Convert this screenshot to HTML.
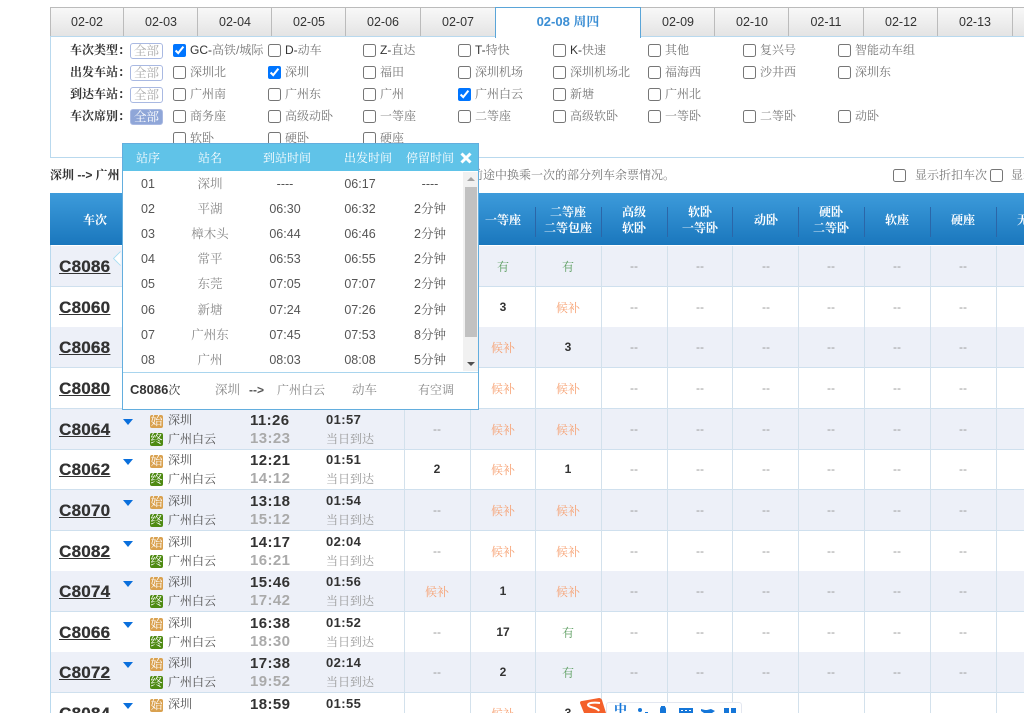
<!DOCTYPE html>
<html lang="zh"><head><meta charset="utf-8"><title>车次</title>
<style>
html{overflow:hidden;height:713px;width:1024px}
html,body{margin:0;padding:0;background:#fff}
body{width:1024px;height:713px;overflow:hidden;position:relative;font:12px/16px "Liberation Sans","Noto Serif CJK SC",serif;color:#666}
div,span,b,i,a,input,s{position:absolute;white-space:nowrap;font-style:normal;text-decoration:none}
input{margin:0;width:13px;height:13px}
.t{top:7px;height:28px;line-height:29px;width:74px;text-align:center;color:#333;border-top:1px solid #bbb;border-left:1px solid #bbb;background:linear-gradient(#f8f8f8,#e4e4e4);font-size:12.5px}
.lb{left:70px;font-weight:bold;color:#333}
.all{left:130px;width:31px;height:14px;line-height:14px;border:1px solid #a9b9e2;border-radius:3px;color:#aaa;text-align:center;font-size:12.5px}
.x{color:#777}
.r{left:51px;width:973px;height:40px;border-bottom:1px solid #cfe0ee;overflow:hidden}
.o{background:#edf0f8}
.n{left:8px;top:11px;font:bold 17px/20px "Liberation Sans",sans-serif;color:#333;text-decoration:underline;letter-spacing:.2px;text-shadow:.3px 0 #333}
.ar{left:72px;top:10px;width:0;height:0;border:5px solid transparent;border-top:6px solid #0a6fdc;border-bottom:0}
.i1,.i2{left:99px;width:13px;height:13px;line-height:13px;border-radius:2px;text-align:center;color:#fff;font-size:12px;overflow:hidden}
.i1{top:6px;background:#d9a14f}.i2{top:24px;background:#4e8a12}
.s1,.s2{left:117px;color:#555}.s1{top:3px}.s2{top:22px}
.d1,.d2{left:199px;font:bold 15px/16px "Liberation Sans",sans-serif;letter-spacing:.4px;color:#333}.d1{top:4px}.d2{top:22px;color:#aaa}
.l1{left:275px;top:3px;font:bold 13px/16px "Liberation Sans",sans-serif;letter-spacing:.4px;color:#333}
.l2{left:275px;top:22px;color:#999}
.c{top:12px;width:66px;text-align:center;color:#999}
.g{color:#5f9f63;top:13px}.h{color:#f7a172;top:13px}.m{color:#333;font-weight:bold}
.c1{left:353px}.c2{left:419px}.c3{left:484px}.c4{left:550px}.c5{left:616px}.c6{left:682px}.c7{left:747px}.c8{left:813px}.c9{left:879px}.c10{left:945px}
.v{top:246px;height:467px;width:1px;background:#d3e1ec}
.hs{top:207px;height:30px;width:1px;background:#2b66a8}
.hh{top:204px;width:66px;text-align:center;color:#fff;font-weight:bold;line-height:16px}
.hc{top:212px}
.p{color:#fff;top:150px;font-size:12px;text-align:center}
.q{color:#555;text-align:center;font-size:12.5px}
.y1{top:176px}.y2{top:201px}.y3{top:226px}.y4{top:251px}.y5{top:276px}.y6{top:302px}.y7{top:327px}.y8{top:352px}
.k1{left:128px;width:40px}.k2{left:180px;width:60px;color:#888}.k3{left:255px;width:60px}.k4{left:330px;width:60px}.k5{left:400px;width:60px}
</style></head><body>

<div style="left:50px;top:7px;width:72px;height:28px;line-height:29px;text-align:center;color:#333;border:1px solid #bbb;border-bottom:0;background:linear-gradient(#f8f8f8,#e4e4e4);font-size:12.5px">02-02</div>
<div class="t" style="left:123px">02-03</div>
<div class="t" style="left:197px">02-04</div>
<div class="t" style="left:271px">02-05</div>
<div class="t" style="left:345px">02-06</div>
<div class="t" style="left:420px">02-07</div>
<div class="t" style="left:640px">02-09</div>
<div class="t" style="left:714px">02-10</div>
<div class="t" style="left:788px">02-11</div>
<div class="t" style="left:863px">02-12</div>
<div class="t" style="left:937px">02-13</div>
<div class="t" style="left:1012px;width:11px"></div>

<div style="left:50px;top:36px;width:973px;height:120px;border:1px solid #b9d9ee;border-right:0"></div>
<div style="left:495px;top:7px;width:144px;height:30px;background:#fff;border:1px solid #5aa5d8;border-bottom:0;border-width:1px 1px 0 1px;line-height:28px;text-align:center;color:#3b8ed4;font-weight:bold;font-size:13px">02-08 周四</div>

<b class="lb" style="top:42px">车次类型：</b><span class="all" style="top:43px">全部</span>
<b class="lb" style="top:64px">出发车站：</b><span class="all" style="top:65px">全部</span>
<b class="lb" style="top:86px">到达车站：</b><span class="all" style="top:87px">全部</span>
<b class="lb" style="top:108px">车次席别：</b><span class="all" style="top:109px;background:#8fa6d8;color:#fff">全部</span>

<input type="checkbox" checked style="left:173px;top:44px"><span class="x" style="left:190px;top:42px"><span style="position:static;color:#333">GC-</span>高铁/城际</span>
<input type="checkbox" style="left:268px;top:44px"><span class="x" style="left:285px;top:42px"><span style="position:static;color:#333">D-</span>动车</span>
<input type="checkbox" style="left:363px;top:44px"><span class="x" style="left:380px;top:42px"><span style="position:static;color:#333">Z-</span>直达</span>
<input type="checkbox" style="left:458px;top:44px"><span class="x" style="left:475px;top:42px"><span style="position:static;color:#333">T-</span>特快</span>
<input type="checkbox" style="left:553px;top:44px"><span class="x" style="left:570px;top:42px"><span style="position:static;color:#333">K-</span>快速</span>
<input type="checkbox" style="left:648px;top:44px"><span class="x" style="left:665px;top:42px">其他</span>
<input type="checkbox" style="left:743px;top:44px"><span class="x" style="left:760px;top:42px">复兴号</span>
<input type="checkbox" style="left:838px;top:44px"><span class="x" style="left:855px;top:42px">智能动车组</span>

<input type="checkbox" style="left:173px;top:66px"><span class="x" style="left:190px;top:64px">深圳北</span>
<input type="checkbox" checked style="left:268px;top:66px"><span class="x" style="left:285px;top:64px">深圳</span>
<input type="checkbox" style="left:363px;top:66px"><span class="x" style="left:380px;top:64px">福田</span>
<input type="checkbox" style="left:458px;top:66px"><span class="x" style="left:475px;top:64px">深圳机场</span>
<input type="checkbox" style="left:553px;top:66px"><span class="x" style="left:570px;top:64px">深圳机场北</span>
<input type="checkbox" style="left:648px;top:66px"><span class="x" style="left:665px;top:64px">福海西</span>
<input type="checkbox" style="left:743px;top:66px"><span class="x" style="left:760px;top:64px">沙井西</span>
<input type="checkbox" style="left:838px;top:66px"><span class="x" style="left:855px;top:64px">深圳东</span>

<input type="checkbox" style="left:173px;top:88px"><span class="x" style="left:190px;top:86px">广州南</span>
<input type="checkbox" style="left:268px;top:88px"><span class="x" style="left:285px;top:86px">广州东</span>
<input type="checkbox" style="left:363px;top:88px"><span class="x" style="left:380px;top:86px">广州</span>
<input type="checkbox" checked style="left:458px;top:88px"><span class="x" style="left:475px;top:86px">广州白云</span>
<input type="checkbox" style="left:553px;top:88px"><span class="x" style="left:570px;top:86px">新塘</span>
<input type="checkbox" style="left:648px;top:88px"><span class="x" style="left:665px;top:86px">广州北</span>

<input type="checkbox" style="left:173px;top:110px"><span class="x" style="left:190px;top:108px">商务座</span>
<input type="checkbox" style="left:268px;top:110px"><span class="x" style="left:285px;top:108px">高级动卧</span>
<input type="checkbox" style="left:363px;top:110px"><span class="x" style="left:380px;top:108px">一等座</span>
<input type="checkbox" style="left:458px;top:110px"><span class="x" style="left:475px;top:108px">二等座</span>
<input type="checkbox" style="left:553px;top:110px"><span class="x" style="left:570px;top:108px">高级软卧</span>
<input type="checkbox" style="left:648px;top:110px"><span class="x" style="left:665px;top:108px">一等卧</span>
<input type="checkbox" style="left:743px;top:110px"><span class="x" style="left:760px;top:108px">二等卧</span>
<input type="checkbox" style="left:838px;top:110px"><span class="x" style="left:855px;top:108px">动卧</span>

<input type="checkbox" style="left:173px;top:132px"><span class="x" style="left:190px;top:130px">软卧</span>
<input type="checkbox" style="left:268px;top:132px"><span class="x" style="left:285px;top:130px">硬卧</span>
<input type="checkbox" style="left:363px;top:132px"><span class="x" style="left:380px;top:130px">硬座</span>

<b style="left:50px;top:167px;color:#333">深圳 --&gt; 广州</b>
<span class="x" style="left:471px;top:167px">前途中换乘一次的部分列车余票情况。</span>
<input type="checkbox" style="left:893px;top:169px"><span class="x" style="left:915px;top:167px">显示折扣车次</span>
<input type="checkbox" style="left:990px;top:169px"><span class="x" style="left:1011px;top:167px;width:13px;overflow:hidden">显示积分兑换车次</span>

<div style="left:50px;top:193px;width:974px;height:52px;background:linear-gradient(#3d9bdb,#1a77bd)"></div>
<b class="hh hc" style="left:62px">车次</b>
<b class="hh hc" style="left:470px">一等座</b>
<b class="hh" style="left:535px">二等座<br>二等包座</b>
<b class="hh" style="left:601px">高级<br>软卧</b>
<b class="hh" style="left:667px">软卧<br>一等卧</b>
<b class="hh hc" style="left:733px">动卧</b>
<b class="hh" style="left:798px">硬卧<br>二等卧</b>
<b class="hh hc" style="left:864px">软座</b>
<b class="hh hc" style="left:930px">硬座</b>
<b class="hh hc" style="left:996px;width:28px;overflow:hidden;text-align:left;text-indent:21px">无座</b>
<s class="hs" style="left:535px"></s><s class="hs" style="left:601px"></s><s class="hs" style="left:667px"></s><s class="hs" style="left:732px"></s><s class="hs" style="left:798px"></s><s class="hs" style="left:864px"></s><s class="hs" style="left:930px"></s><s class="hs" style="left:996px"></s>

<div style="left:50px;top:245px;width:1px;height:468px;background:#b9d9ee"></div>

<div class="r o" style="top:246px"><a class="n">C8086</a><i class="c c2 g">有</i><i class="c c3 g">有</i><i class="c c4">--</i><i class="c c5">--</i><i class="c c6">--</i><i class="c c7">--</i><i class="c c8">--</i><i class="c c9">--</i></div>
<div class="r" style="top:287px"><a class="n">C8060</a><i class="c c2 m">3</i><i class="c c3 h">候补</i><i class="c c4">--</i><i class="c c5">--</i><i class="c c6">--</i><i class="c c7">--</i><i class="c c8">--</i><i class="c c9">--</i></div>
<div class="r o" style="top:327px"><a class="n">C8068</a><i class="c c2 h">候补</i><i class="c c3 m">3</i><i class="c c4">--</i><i class="c c5">--</i><i class="c c6">--</i><i class="c c7">--</i><i class="c c8">--</i><i class="c c9">--</i></div>
<div class="r" style="top:368px"><a class="n">C8080</a><i class="c c2 h">候补</i><i class="c c3 h">候补</i><i class="c c4">--</i><i class="c c5">--</i><i class="c c6">--</i><i class="c c7">--</i><i class="c c8">--</i><i class="c c9">--</i></div>

<div class="r o" style="top:409px"><a class="n">C8064</a><s class="ar"></s><i class="i1">始</i><i class="i2">终</i><span class="s1">深圳</span><span class="s2">广州白云</span><b class="d1">11:26</b><b class="d2">13:23</b><b class="l1">01:57</b><span class="l2">当日到达</span><i class="c c1">--</i><i class="c c2 h">候补</i><i class="c c3 h">候补</i><i class="c c4">--</i><i class="c c5">--</i><i class="c c6">--</i><i class="c c7">--</i><i class="c c8">--</i><i class="c c9">--</i></div>
<div class="r" style="top:449px"><a class="n">C8062</a><s class="ar"></s><i class="i1">始</i><i class="i2">终</i><span class="s1">深圳</span><span class="s2">广州白云</span><b class="d1">12:21</b><b class="d2">14:12</b><b class="l1">01:51</b><span class="l2">当日到达</span><i class="c c1 m">2</i><i class="c c2 h">候补</i><i class="c c3 m">1</i><i class="c c4">--</i><i class="c c5">--</i><i class="c c6">--</i><i class="c c7">--</i><i class="c c8">--</i><i class="c c9">--</i></div>
<div class="r o" style="top:490px"><a class="n">C8070</a><s class="ar"></s><i class="i1">始</i><i class="i2">终</i><span class="s1">深圳</span><span class="s2">广州白云</span><b class="d1">13:18</b><b class="d2">15:12</b><b class="l1">01:54</b><span class="l2">当日到达</span><i class="c c1">--</i><i class="c c2 h">候补</i><i class="c c3 h">候补</i><i class="c c4">--</i><i class="c c5">--</i><i class="c c6">--</i><i class="c c7">--</i><i class="c c8">--</i><i class="c c9">--</i></div>
<div class="r" style="top:531px"><a class="n">C8082</a><s class="ar"></s><i class="i1">始</i><i class="i2">终</i><span class="s1">深圳</span><span class="s2">广州白云</span><b class="d1">14:17</b><b class="d2">16:21</b><b class="l1">02:04</b><span class="l2">当日到达</span><i class="c c1">--</i><i class="c c2 h">候补</i><i class="c c3 h">候补</i><i class="c c4">--</i><i class="c c5">--</i><i class="c c6">--</i><i class="c c7">--</i><i class="c c8">--</i><i class="c c9">--</i></div>
<div class="r o" style="top:571px"><a class="n">C8074</a><s class="ar"></s><i class="i1">始</i><i class="i2">终</i><span class="s1">深圳</span><span class="s2">广州白云</span><b class="d1">15:46</b><b class="d2">17:42</b><b class="l1">01:56</b><span class="l2">当日到达</span><i class="c c1 h">候补</i><i class="c c2 m">1</i><i class="c c3 h">候补</i><i class="c c4">--</i><i class="c c5">--</i><i class="c c6">--</i><i class="c c7">--</i><i class="c c8">--</i><i class="c c9">--</i></div>
<div class="r" style="top:612px"><a class="n">C8066</a><s class="ar"></s><i class="i1">始</i><i class="i2">终</i><span class="s1">深圳</span><span class="s2">广州白云</span><b class="d1">16:38</b><b class="d2">18:30</b><b class="l1">01:52</b><span class="l2">当日到达</span><i class="c c1">--</i><i class="c c2 m">17</i><i class="c c3 g">有</i><i class="c c4">--</i><i class="c c5">--</i><i class="c c6">--</i><i class="c c7">--</i><i class="c c8">--</i><i class="c c9">--</i></div>
<div class="r o" style="top:652px"><a class="n">C8072</a><s class="ar"></s><i class="i1">始</i><i class="i2">终</i><span class="s1">深圳</span><span class="s2">广州白云</span><b class="d1">17:38</b><b class="d2">19:52</b><b class="l1">02:14</b><span class="l2">当日到达</span><i class="c c1">--</i><i class="c c2 m">2</i><i class="c c3 g">有</i><i class="c c4">--</i><i class="c c5">--</i><i class="c c6">--</i><i class="c c7">--</i><i class="c c8">--</i><i class="c c9">--</i></div>
<div class="r" style="top:693px;height:20px;border:0"><a class="n">C8084</a><s class="ar"></s><i class="i1">始</i><span class="s1">深圳</span><b class="d1">18:59</b><b class="l1">01:55</b><i class="c c2 h">候补</i><i class="c c3 m">3</i></div>

<s class="v" style="left:404px"></s><s class="v" style="left:470px"></s><s class="v" style="left:535px"></s><s class="v" style="left:601px"></s><s class="v" style="left:667px"></s><s class="v" style="left:732px"></s><s class="v" style="left:798px"></s><s class="v" style="left:864px"></s><s class="v" style="left:930px"></s><s class="v" style="left:996px"></s>

<div style="left:122px;top:143px;width:355px;height:265px;background:#fff;border:1px solid #63aede"></div>
<div style="left:123px;top:144px;width:355px;height:27px;background:#60c3e8"></div>
<div style="left:115px;top:253px;width:9px;height:9px;background:#fff;border:1px solid #a5dcf2;transform:rotate(45deg);clip-path:polygon(0 0,0 100%,100% 100%)"></div>
<span class="p k1">站序</span><span class="p k2" style="color:#fff">站名</span><span class="p k3" style="left:257px">到站时间</span><span class="p" style="left:338px;width:60px">出发时间</span><span class="p k5">停留时间</span>
<svg style="position:absolute;left:460px;top:152px" width="12" height="12" viewBox="0 0 12 12"><path d="M1.5 1.5L10.5 10.5M10.5 1.5L1.5 10.5" stroke="#fff" stroke-width="3"/></svg>

<span class="q k1 y1">01</span><span class="q k2 y1">深圳</span><span class="q k3 y1">----</span><span class="q k4 y1">06:17</span><span class="q k5 y1">----</span>
<span class="q k1 y2">02</span><span class="q k2 y2">平湖</span><span class="q k3 y2">06:30</span><span class="q k4 y2">06:32</span><span class="q k5 y2">2分钟</span>
<span class="q k1 y3">03</span><span class="q k2 y3">樟木头</span><span class="q k3 y3">06:44</span><span class="q k4 y3">06:46</span><span class="q k5 y3">2分钟</span>
<span class="q k1 y4">04</span><span class="q k2 y4">常平</span><span class="q k3 y4">06:53</span><span class="q k4 y4">06:55</span><span class="q k5 y4">2分钟</span>
<span class="q k1 y5">05</span><span class="q k2 y5">东莞</span><span class="q k3 y5">07:05</span><span class="q k4 y5">07:07</span><span class="q k5 y5">2分钟</span>
<span class="q k1 y6">06</span><span class="q k2 y6">新塘</span><span class="q k3 y6">07:24</span><span class="q k4 y6">07:26</span><span class="q k5 y6">2分钟</span>
<span class="q k1 y7">07</span><span class="q k2 y7">广州东</span><span class="q k3 y7">07:45</span><span class="q k4 y7">07:53</span><span class="q k5 y7">8分钟</span>
<span class="q k1 y8">08</span><span class="q k2 y8">广州</span><span class="q k3 y8">08:03</span><span class="q k4 y8">08:08</span><span class="q k5 y8">5分钟</span>

<div style="left:463px;top:172px;width:15px;height:199px;background:#f1f1f1"></div>
<div style="left:465px;top:187px;width:12px;height:150px;background:#c1c1c1"></div>
<div style="left:467px;top:177px;width:0;height:0;border:4px solid transparent;border-bottom:4px solid #a3a3a3;border-top:0"></div>
<div style="left:467px;top:362px;width:0;height:0;border:4px solid transparent;border-top:4px solid #505050;border-bottom:0"></div>
<div style="left:123px;top:372px;width:355px;height:1px;background:#a9d5ee"></div>

<b style="left:130px;top:382px;color:#333;font-size:13px">C8086<span style="position:static;font-weight:normal;font-size:12px">次</span></b>
<span style="left:215px;top:382px;color:#888;font-size:12.5px">深圳</span>
<b style="left:249px;top:382px;color:#555">--&gt;</b>
<span style="left:277px;top:382px;color:#888;font-size:12px">广州白云</span>
<span style="left:352px;top:382px;color:#888;font-size:12.5px">动车</span>
<span style="left:418px;top:382px;color:#888;font-size:12px">有空调</span>

<div style="left:606px;top:702px;width:134px;height:10px;background:#fff;border:1px solid #e3e7f0;border-bottom:0;border-radius:3px 3px 0 0"></div>
<svg style="position:absolute;left:579px;top:697px" width="28" height="16" viewBox="0 0 28 16"><path d="M1 6Q1 4 3 4L20 1Q22 1 23 3L27 16H5Z" fill="#f4602a"/><path d="M21 6C14 5 9 6 9 8C10 11 18 10 20 14" stroke="#fff" stroke-width="2" fill="none"/></svg>
<span style="left:614px;top:703px;height:10px;overflow:hidden;color:#1576d8;font-weight:bold;font-size:13px;line-height:14px">中</span>
<svg style="position:absolute;left:636px;top:702px" width="104" height="11" viewBox="0 0 104 11" fill="#1576d8"><circle cx="4" cy="8" r="2"/><path d="M9 10h3v1H9z"/><path d="M24 7a3 3 0 0 1 6 0v4h-6zM25 4h4v7h-4z"/><path d="M43 6h14v5H43z"/><path d="M45 8h2v1h-2zM49 8h2v1h-2zM53 8h2v1h-2z" fill="#fff"/><path d="M65 7l4 1h2l4-1 4 2-3 2H68l-3-2zM88 6h5v5h-5zM95 6h5v5h-5z"/></svg>
</body></html>
